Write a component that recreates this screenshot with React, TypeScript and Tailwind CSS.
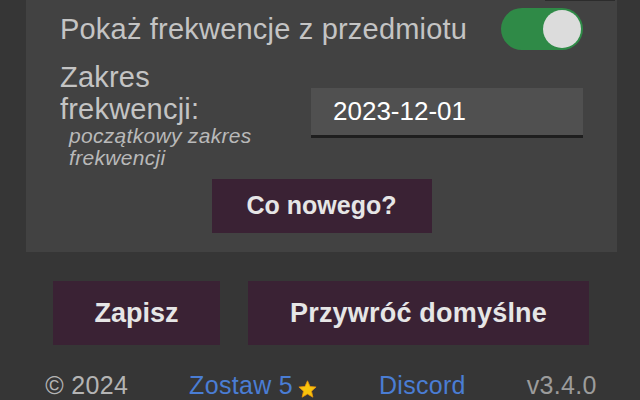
const font = { fontFamily: '"Liberation Sans", Arial, sans-serif' };

function Toggle() {
  return (
    <div className="flex h-[42px] w-[82px] items-center justify-end rounded-full bg-[#2f8a47] p-[2px]">
      <div className="size-[38px] rounded-full bg-[#dcdcdc]" />
    </div>
  );
}

function Star() {
  return (
    <svg viewBox="0 0 24 22" className="ml-[4px] h-[18px] w-[21px] self-center translate-y-[3px]">
      <path
        d="M12 1l3.1 6.9 7.4.7-5.6 5 1.7 7.4L12 17.2 5.4 21l1.7-7.4-5.6-5 7.4-.7z"
        fill="#f7c40c"
        stroke="#e8920c"
        strokeWidth="1"
        strokeLinejoin="round"
      />
    </svg>
  );
}

export default function App() {
  return (
    <div className="h-[400px] w-[640px] overflow-hidden bg-[#363636]" style={font}>
      <section className="relative ml-[26px] w-[591px] bg-[#424242] px-[34px] pb-[19px] pt-[8px]">
        <div className="absolute left-[519px] top-0 h-px w-[70px] bg-[#2c2c2c]" />

        <div className="flex h-[42px] items-center justify-between">
          <span className="text-[29px] leading-[33px] tracking-[0.2px] text-[#c4c4c4]">Pokaż frekwencje z przedmiotu</span>
          <Toggle />
        </div>

        <div className="mt-[11px] flex">
          <div className="w-[251px]">
            <p className="text-[29px] leading-[32px] tracking-[0.2px] text-[#c4c4c4]">
              Zakres
              <br />
              frekwencji:
            </p>
            <p className="pl-[9px] text-[21px] italic leading-[22px] tracking-[0.3px] text-[#b9b9b9]">
              początkowy zakres
              <br />
              frekwencji
            </p>
          </div>
          <div className="mt-[27px] flex h-[50px] w-[272px] items-center self-start border-b-[3px] border-[#1e1e1e] bg-[#505050] pl-[22px] text-[26px] text-white">
            2023-12-01
          </div>
        </div>

        <div className="mt-[10px] flex justify-center">
          <button className="h-[54px] w-[220px] bg-[#3a2234] text-[25px] font-bold text-[#e6e6e6]">
            Co nowego?
          </button>
        </div>
      </section>

      <div className="mt-[29px] flex justify-center gap-[28px] pl-[2px]">
        <button className="h-[64px] w-[167px] bg-[#3a2234] text-[27px] font-bold text-[#e6e6e6]">Zapisz</button>
        <button className="h-[64px] w-[341px] bg-[#3a2234] text-[27px] font-bold tracking-[0.2px] text-[#e6e6e6]">
          Przywróć domyślne
        </button>
      </div>

      <footer className="mt-[26px] flex justify-center gap-[61px] pl-[2px] text-[25px] leading-[29px] tracking-[0.3px]">
        <span className="text-[#b4b4b4]">© 2024</span>
        <span className="flex text-[#4a7dd4]">
          Zostaw 5<Star />
        </span>
        <span className="text-[#4a7dd4]">Discord</span>
        <span className="text-[#9c9c9c]">v3.4.0</span>
      </footer>
    </div>
  );
}
